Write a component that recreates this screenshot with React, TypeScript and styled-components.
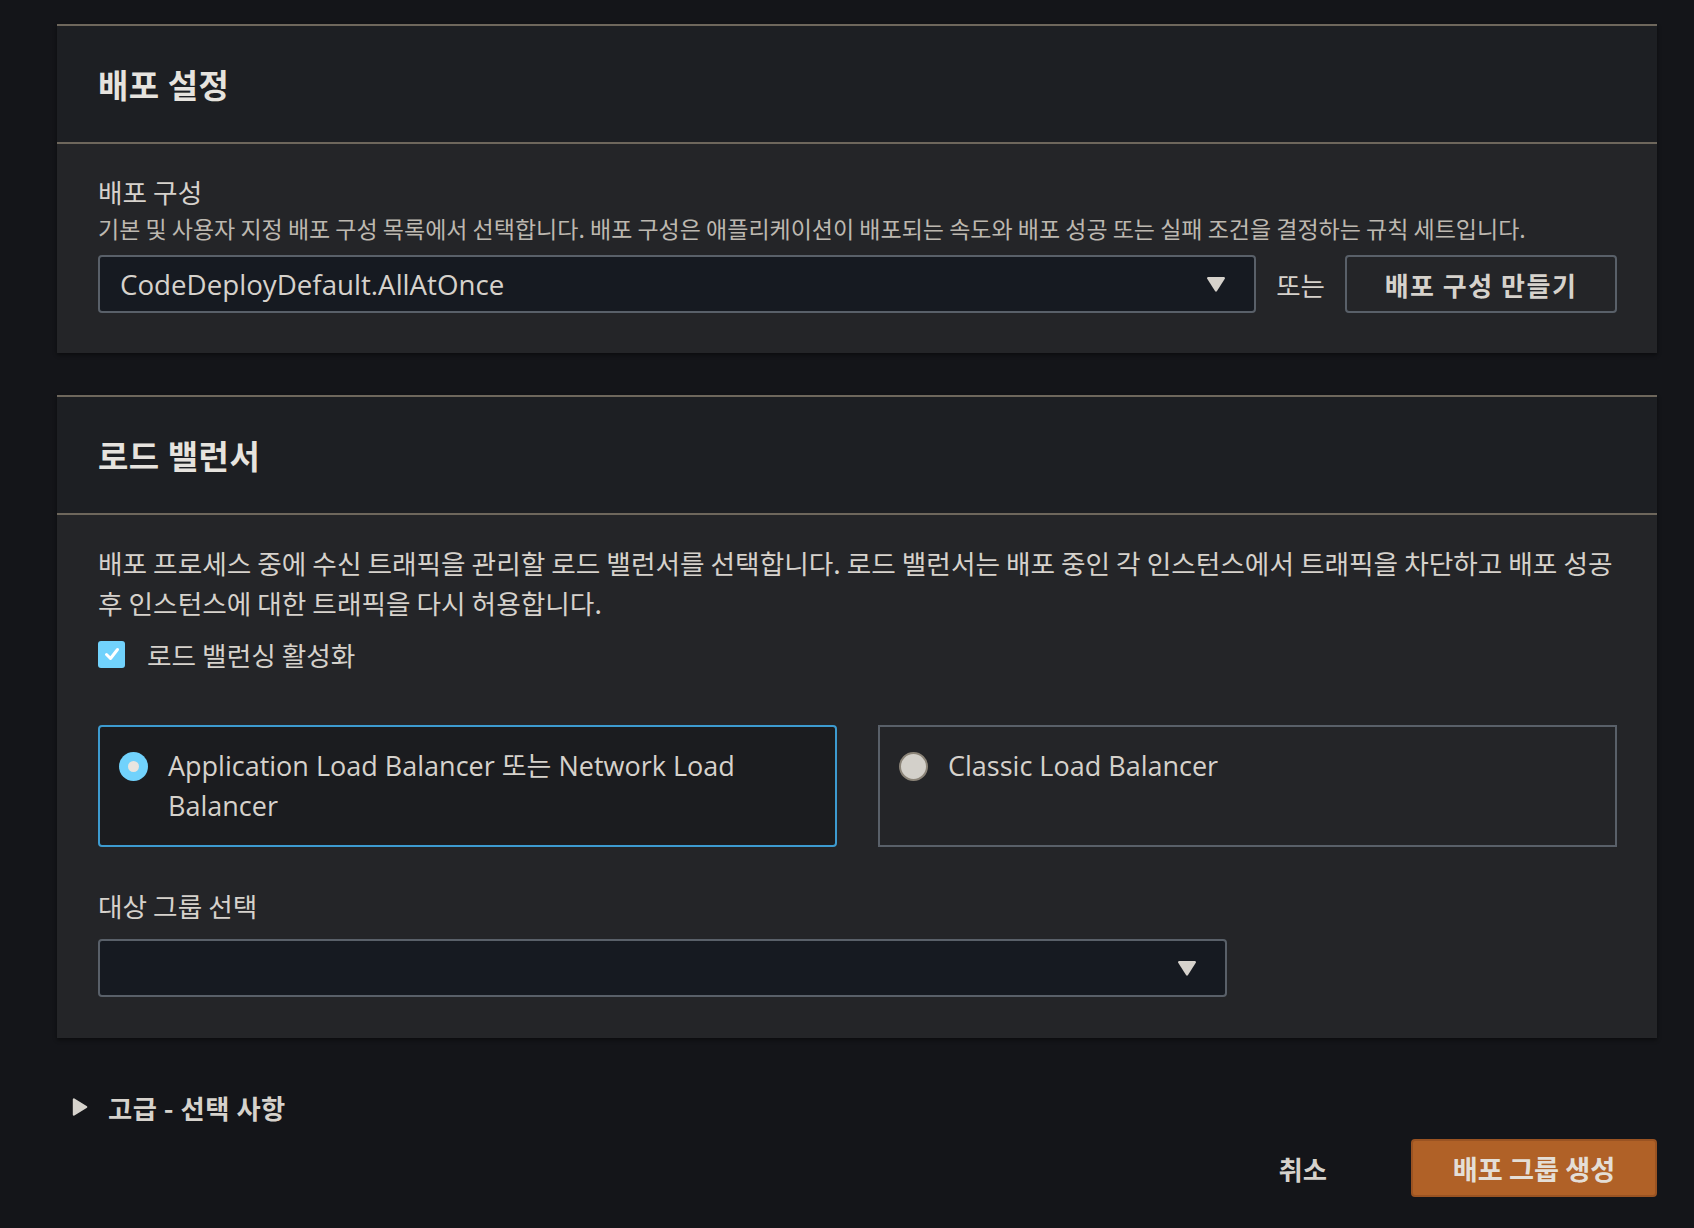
import React from "react";
import styled, { createGlobalStyle } from "styled-components";

const palette = {
  page: "#141519",
  header: "#1d1f23",
  body: "#242528",
  rule: "#6e675c",
  field: "#161a21",
  fieldBorder: "#596069",
  text: "#d6d2cc",
  textDim: "#bdb8b0",
  title: "#e6e3de",
  blue: "#3d9bd0",
  blueLight: "#71d2fc",
  cardDark: "#1b1c1f",
  orange: "#b06127",
  orangeBorder: "#9a5322",
};

const KO = `"Noto Sans CJK KR", "Noto Sans", sans-serif`;
const LATIN = `"Open Sans", "Noto Sans CJK KR", sans-serif`;

const GlobalStyle = createGlobalStyle`
  html, body {
    margin: 0;
    padding: 0;
    background: ${palette.page};
    min-height: 100%;
  }
  body {
    font-family: ${KO};
    color: ${palette.text};
  }
`;

const Caret = () => (
  <svg width="20" height="16" viewBox="0 0 20 16">
    <path
      d="M2.2 1h15.6a1.2 1.2 0 0 1 1 1.8l-7.8 12.2a1.2 1.2 0 0 1-2 0L1.2 2.8A1.2 1.2 0 0 1 2.2 1z"
      fill={palette.text}
    />
  </svg>
);

const App = () => {
  return (
    <>
      <GlobalStyle />
      <Page>
        <Panel>
          <PanelHeader>
            <Title>배포 설정</Title>
          </PanelHeader>
          <PanelBody $top={32} $bottom={40}>
            <FieldLabel>배포 구성</FieldLabel>
            <FieldHint>
              기본 및 사용자 지정 배포 구성 목록에서 선택합니다. 배포 구성은 애플리케이션이 배포되는 속도와 배포 성공 또는 실패 조건을 결정하는 규칙 세트입니다.
            </FieldHint>
            <FieldRow>
              <Select>
                <SelectValue>CodeDeployDefault.AllAtOnce</SelectValue>
                <Caret />
              </Select>
              <OrText>또는</OrText>
              <SecondaryButton>배포 구성 만들기</SecondaryButton>
            </FieldRow>
          </PanelBody>
        </Panel>

        <Panel>
          <PanelHeader>
            <Title>로드 밸런서</Title>
          </PanelHeader>
          <PanelBody $top={28} $bottom={41}>
            <Paragraph>
              배포 프로세스 중에 수신 트래픽을 관리할 로드 밸런서를 선택합니다. 로드 밸런서는 배포 중인 각 인스턴스에서 트래픽을 차단하고 배포 성공 후 인스턴스에 대한 트래픽을 다시 허용합니다.
            </Paragraph>
            <CheckRow>
              <Checkbox>
                <svg width="18" height="18" viewBox="0 0 18 18">
                  <polyline
                    points="3.5,9.5 7.5,13.5 14.5,4.5"
                    fill="none"
                    stroke="#ffffff"
                    strokeWidth="3"
                    strokeLinecap="round"
                    strokeLinejoin="round"
                  />
                </svg>
              </Checkbox>
              <CheckLabel>로드 밸런싱 활성화</CheckLabel>
            </CheckRow>

            <OptionGrid>
              <OptionCard $selected>
                <Radio $checked />
                <OptionText>Application Load Balancer 또는 Network Load Balancer</OptionText>
              </OptionCard>
              <OptionCard>
                <Radio />
                <OptionText>Classic Load Balancer</OptionText>
              </OptionCard>
            </OptionGrid>

            <FieldLabel $gap={43}>대상 그룹 선택</FieldLabel>
            <TargetRow>
              <Select $maxWidth={1129}>
                <SelectValue />
                <Caret />
              </Select>
            </TargetRow>
          </PanelBody>
        </Panel>

        <Advanced>
          <svg width="16" height="20" viewBox="0 0 16 20">
            <path
              d="M2.4 1.4L14.6 9a1.2 1.2 0 0 1 0 2L2.4 18.6A1.1 1.1 0 0 1 0.8 17.6V2.4A1.1 1.1 0 0 1 2.4 1.4z"
              fill={palette.text}
            />
          </svg>
          <AdvancedText>고급 - 선택 사항</AdvancedText>
        </Advanced>

        <Footer>
          <CancelButton>취소</CancelButton>
          <PrimaryButton>배포 그룹 생성</PrimaryButton>
        </Footer>
      </Page>
    </>
  );
};

const Page = styled.main`
  width: 1600px;
  padding: 24px 0 31px 57px;
`;

const Panel = styled.section`
  background: ${palette.body};
  border-top: 2px solid ${palette.rule};
  box-shadow: 0 2px 4px rgba(0, 0, 0, 0.45);
  & + & {
    margin-top: 42px;
  }
`;

const PanelHeader = styled.header`
  height: 116px;
  display: flex;
  align-items: center;
  padding: 0 41px;
  background: ${palette.header};
  border-bottom: 2px solid ${palette.rule};
`;

const Title = styled.h2`
  margin: 0;
  font-size: 33px;
  font-weight: 700;
  line-height: 1;
  letter-spacing: 0.5px;
  color: ${palette.title};
`;

const PanelBody = styled.div<{ $top: number; $bottom: number }>`
  padding: ${(p) => p.$top}px 40px ${(p) => p.$bottom}px 41px;
`;

const FieldLabel = styled.div<{ $gap?: number }>`
  margin-top: ${(p) => p.$gap ?? 0}px;
  font-size: 26.7px;
  line-height: 32px;
  color: ${palette.text};
`;

const FieldHint = styled.p`
  margin: 6px 0 0;
  font-size: 23px;
  line-height: 28px;
  color: ${palette.textDim};
  white-space: nowrap;
`;

const FieldRow = styled.div`
  display: flex;
  align-items: center;
  gap: 20px;
  margin-top: 13px;
`;

const TargetRow = styled.div`
  margin-top: 17px;
`;

const Select = styled.div<{ $maxWidth?: number }>`
  flex: 1;
  box-sizing: border-box;
  height: 58px;
  max-width: ${(p) => (p.$maxWidth ? `${p.$maxWidth}px` : "none")};
  display: flex;
  align-items: center;
  justify-content: space-between;
  padding: 0 28px 0 20px;
  background: ${palette.field};
  border: 2px solid ${palette.fieldBorder};
  border-radius: 4px;
`;

const SelectValue = styled.span`
  font-family: ${LATIN};
  font-size: 27.7px;
  color: ${palette.text};
`;

const OrText = styled.span`
  font-size: 26.5px;
  color: ${palette.text};
`;

const SecondaryButton = styled.button`
  box-sizing: border-box;
  width: 272px;
  height: 58px;
  background: transparent;
  border: 2px solid ${palette.fieldBorder};
  border-radius: 4px;
  font-family: ${KO};
  font-size: 26px;
  font-weight: 700;
  letter-spacing: 1.5px;
  color: ${palette.text};
`;

const Paragraph = styled.p`
  margin: 0;
  font-size: 26.7px;
  line-height: 40px;
  color: ${palette.text};
`;

const CheckRow = styled.label`
  display: flex;
  align-items: center;
  gap: 22px;
  height: 40px;
  margin-top: 11px;
`;

const Checkbox = styled.span`
  width: 27px;
  height: 27px;
  border-radius: 3px;
  background: ${palette.blueLight};
  display: flex;
  align-items: center;
  justify-content: center;
`;

const CheckLabel = styled.span`
  font-size: 26.7px;
  color: ${palette.text};
`;

const OptionGrid = styled.div`
  display: grid;
  grid-template-columns: 1fr 1fr;
  gap: 41px;
  margin-top: 51px;
`;

const OptionCard = styled.div<{ $selected?: boolean }>`
  box-sizing: border-box;
  height: 122px;
  display: flex;
  align-items: flex-start;
  gap: 20px;
  padding: 19px 20px 0 19px;
  background: ${(p) => (p.$selected ? palette.cardDark : "transparent")};
  border: 2px solid ${(p) => (p.$selected ? palette.blue : palette.fieldBorder)};
  border-radius: ${(p) => (p.$selected ? "4px" : "0")};
`;

const Radio = styled.span<{ $checked?: boolean }>`
  flex: none;
  box-sizing: border-box;
  width: 29px;
  height: 29px;
  margin-top: 5.5px;
  border-radius: 50%;
  display: flex;
  align-items: center;
  justify-content: center;
  background: ${(p) => (p.$checked ? palette.blueLight : "#d3d0ca")};
  border: ${(p) => (p.$checked ? "none" : "2px solid #8b8478")};
  &::after {
    content: "";
    display: ${(p) => (p.$checked ? "block" : "none")};
    width: 11px;
    height: 11px;
    border-radius: 50%;
    background: #e8e5e0;
  }
`;

const OptionText = styled.span`
  font-family: ${LATIN};
  font-size: 27px;
  line-height: 40px;
  color: ${palette.text};
`;

const Advanced = styled.div`
  display: flex;
  align-items: center;
  gap: 20px;
  height: 32px;
  margin: 53px 0 0 15px;
`;

const AdvancedText = styled.span`
  font-size: 26.3px;
  font-weight: 700;
  letter-spacing: 0.5px;
  color: ${palette.text};
`;

const Footer = styled.div`
  display: flex;
  justify-content: flex-end;
  align-items: center;
  margin-top: 16px;
`;

const CancelButton = styled.button`
  padding: 0;
  margin-right: 84px;
  background: none;
  border: none;
  font-family: ${KO};
  font-size: 26.4px;
  font-weight: 700;
  color: ${palette.text};
`;

const PrimaryButton = styled.button`
  box-sizing: border-box;
  width: 246px;
  height: 58px;
  background: ${palette.orange};
  border: 2px solid ${palette.orangeBorder};
  border-radius: 4px;
  font-family: ${KO};
  font-size: 27.2px;
  font-weight: 700;
  color: #e4ded6;
`;

export default App;
